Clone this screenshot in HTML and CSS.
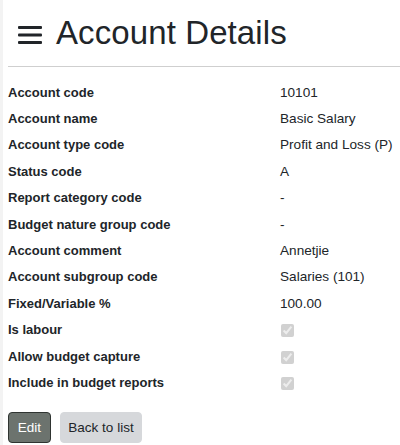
FILE: index.html
```html
<!DOCTYPE html>
<html>
<head>
<meta charset="utf-8">
<link rel="stylesheet" href="styles.css">
</head>
<body>
<div class="page">
  <header class="head">
    <svg class="burger" width="24" height="20" viewBox="0 0 24 20">
      <rect x="0" y="1" width="24" height="3" rx="1" fill="#212529"/>
      <rect x="0" y="8.5" width="24" height="3" rx="1" fill="#212529"/>
      <rect x="0" y="16" width="24" height="3" rx="1" fill="#212529"/>
    </svg>
    <h1 class="title">Account Details</h1>
  </header>
  <hr class="rule">
  <dl class="details">
    <dt>Account code</dt><dd>10101</dd>
    <dt>Account name</dt><dd>Basic Salary</dd>
    <dt>Account type code</dt><dd>Profit and Loss (P)</dd>
    <dt>Status code</dt><dd>A</dd>
    <dt>Report category code</dt><dd>-</dd>
    <dt>Budget nature group code</dt><dd>-</dd>
    <dt>Account comment</dt><dd>Annetjie</dd>
    <dt>Account subgroup code</dt><dd>Salaries (101)</dd>
    <dt>Fixed/Variable %</dt><dd>100.00</dd>
    <dt>Is labour</dt><dd><input class="chk" type="checkbox" checked disabled></dd>
    <dt>Allow budget capture</dt><dd><input class="chk" type="checkbox" checked disabled></dd>
    <dt>Include in budget reports</dt><dd><input class="chk" type="checkbox" checked disabled></dd>
  </dl>
  <div class="actions">
    <button class="btn btn-edit">Edit</button>
    <button class="btn btn-back">Back to list</button>
  </div>
</div>
</body>
</html>
```
FILE: styles.css
```css
html, body {
  margin: 0;
  padding: 0;
  background: #fff;
}
body {
  font-family: "Segoe UI", "Liberation Sans", Arial, sans-serif;
  color: #212529;
  width: 400px;
  height: 445px;
  overflow: hidden;
}
.page {
  border-left: 3px solid #f3f3f3;
  padding-left: 5px;
  height: 445px;
  box-sizing: border-box;
}
.head {
  display: flex;
  align-items: center;
  gap: 14px;
  padding: 13px 0 0 10px;
  height: 40px;
}
.burger {
  display: block;
  margin-top: 4px;
}
.title {
  margin: 0;
  font-size: 33px;
  font-weight: 400;
  line-height: 40px;
  letter-spacing: 0.1px;
}
.rule {
  margin: 13px 0 0 0;
  border: 0;
  border-top: 1px solid #cfcfcf;
}
.details {
  display: grid;
  grid-template-columns: 272px 1fr;
  grid-auto-rows: 26.4px;
  margin: 12px 0 0 0;
  font-size: 13px;
  align-items: center;
}
.details dt {
  font-weight: 700;
  white-space: nowrap;
}
.details dd {
  margin: 0;
  font-size: 13.6px;
  white-space: nowrap;
}
.chk {
  margin: 0 0 0 1px;
  width: 13px;
  height: 13px;
  vertical-align: middle;
}
.actions {
  display: flex;
  gap: 9px;
  margin-top: 16px;
}
.btn {
  font-family: inherit;
  font-size: 13.5px;
  height: 31px;
  border-radius: 4px;
  padding: 0;
  cursor: pointer;
}
.btn-edit {
  background: #6c736e;
  color: #fff;
  border: 1px solid #2f3431;
  width: 43px;
}
.btn-back {
  background: #d6d8db;
  color: #212529;
  border: 1px solid #d6d8db;
  width: 82px;
}
```
